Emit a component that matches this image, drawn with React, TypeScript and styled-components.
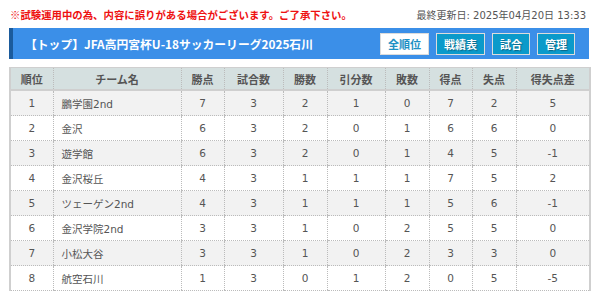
import React from 'react';
import styled, { createGlobalStyle } from 'styled-components';

const GlobalStyle = createGlobalStyle`
  body {
    margin: 0;
    background: #fff;
    font-family: "DejaVu Sans", "Noto Sans CJK JP", sans-serif;
  }
`;

const Page = styled.div`
  width: 580px;
  padding: 0 6px 0 9px;
`;

const TopLine = styled.div`
  height: 20px;
  padding-top: 8px;
  box-sizing: border-box;
  display: flex;
  justify-content: space-between;
  align-items: center;
  font-size: 10px;
`;

const Notice = styled.span`
  color: #ee1111;
  font-weight: bold;
  font-size: 10.4px;
  margin-left: 1px;
  font-family: "Noto Sans CJK JP", sans-serif;
`;

const Updated = styled.span`
  color: #555;
  margin-right: 3px;
`;

const TitleBar = styled.div`
  margin-top: 8px;
  height: 31px;
  box-sizing: border-box;
  background: #3b8fe8;
  border-left: 4px solid #1b5b9c;
  padding: 0 14px 0 12px;
  display: flex;
  align-items: center;
  justify-content: space-between;
`;

const Title = styled.h1`
  margin: 0;
  color: #fff;
  font-size: 11.8px;
  font-weight: bold;
  font-family: "Noto Sans CJK JP", sans-serif;
`;

const Buttons = styled.div`
  display: flex;
  gap: 7px;
`;

const NavButton = styled.button<{ $active?: boolean }>`
  height: 22px;
  padding: 0 7px;
  font-family: "Noto Sans CJK JP", sans-serif;
  font-size: 11px;
  font-weight: bold;
  border: 1px solid #dcdcdc;
  background: ${p => (p.$active ? '#fff' : '#0b9aca')};
  color: ${p => (p.$active ? '#1d90c4' : '#fff')};
  text-shadow: ${p => (p.$active ? 'none' : '1px 1px 1px rgba(0,0,0,0.35)')};
`;

const Table = styled.table`
  margin-top: 8px;
  width: 580px;
  table-layout: fixed;
  border-collapse: collapse;
  border-left: 2px solid #cfcfcf;
  border-right: 2px solid #cfcfcf;
  font-size: 10.5px;
  color: #555;
`;

const HeadCell = styled.th`
  height: 21px;
  padding: 0;
  background: #d5e0e0;
  font-weight: bold;
  font-size: 11px;
  color: #555;
  border-top: 1px solid #cfcfcf;
  border-bottom: 2px solid #cfcfcf;
  border-left: 1px dotted #bbb;
  text-align: center;
  font-family: "Noto Sans CJK JP", sans-serif;
`;

const Row = styled.tr<{ $odd: boolean }>`
  background: ${p => (p.$odd ? '#f2f2f2' : '#fff')};
`;

const Cell = styled.td<{ $left?: boolean }>`
  height: 24px;
  padding: 0 ${p => (p.$left ? '8px' : '0')};
  text-align: ${p => (p.$left ? 'left' : 'center')};
  border-bottom: 1px dotted #bbb;
  border-left: 1px dotted #bbb;
`;

const widths = [43, 128, 43, 59, 44, 58, 44, 43, 44, 74];
const heads = ['順位', 'チーム名', '勝点', '試合数', '勝数', '引分数', '敗数', '得点', '失点', '得失点差'];

const rows: [number, string, number, number, number, number, number, number, number, number][] = [
  [1, '鵬学園2nd', 7, 3, 2, 1, 0, 7, 2, 5],
  [2, '金沢', 6, 3, 2, 0, 1, 6, 6, 0],
  [3, '遊学館', 6, 3, 2, 0, 1, 4, 5, -1],
  [4, '金沢桜丘', 4, 3, 1, 1, 1, 7, 5, 2],
  [5, 'ツェーゲン2nd', 4, 3, 1, 1, 1, 5, 6, -1],
  [6, '金沢学院2nd', 3, 3, 1, 0, 2, 5, 5, 0],
  [7, '小松大谷', 3, 3, 1, 0, 2, 3, 3, 0],
  [8, '航空石川', 1, 3, 0, 1, 2, 0, 5, -5],
];

export default function App() {
  return (
    <Page>
      <GlobalStyle />
      <TopLine>
        <Notice>※試験運用中の為、内容に誤りがある場合がございます。ご了承下さい。</Notice>
        <Updated>最終更新日: 2025年04月20日 13:33</Updated>
      </TopLine>
      <TitleBar>
        <Title>【トップ】JFA高円宮杯U-18サッカーリーグ2025石川</Title>
        <Buttons>
          <NavButton $active>全順位</NavButton>
          <NavButton>戦績表</NavButton>
          <NavButton>試合</NavButton>
          <NavButton>管理</NavButton>
        </Buttons>
      </TitleBar>
      <Table>
        <colgroup>
          {widths.map((w, i) => (
            <col key={i} style={{ width: w }} />
          ))}
        </colgroup>
        <thead>
          <tr>
            {heads.map(h => (
              <HeadCell key={h}>{h}</HeadCell>
            ))}
          </tr>
        </thead>
        <tbody>
          {rows.map((r, i) => (
            <Row key={r[0]} $odd={i % 2 === 0}>
              {r.map((v, j) => (
                <Cell key={j} $left={j === 1}>
                  {v}
                </Cell>
              ))}
            </Row>
          ))}
        </tbody>
      </Table>
    </Page>
  );
}
